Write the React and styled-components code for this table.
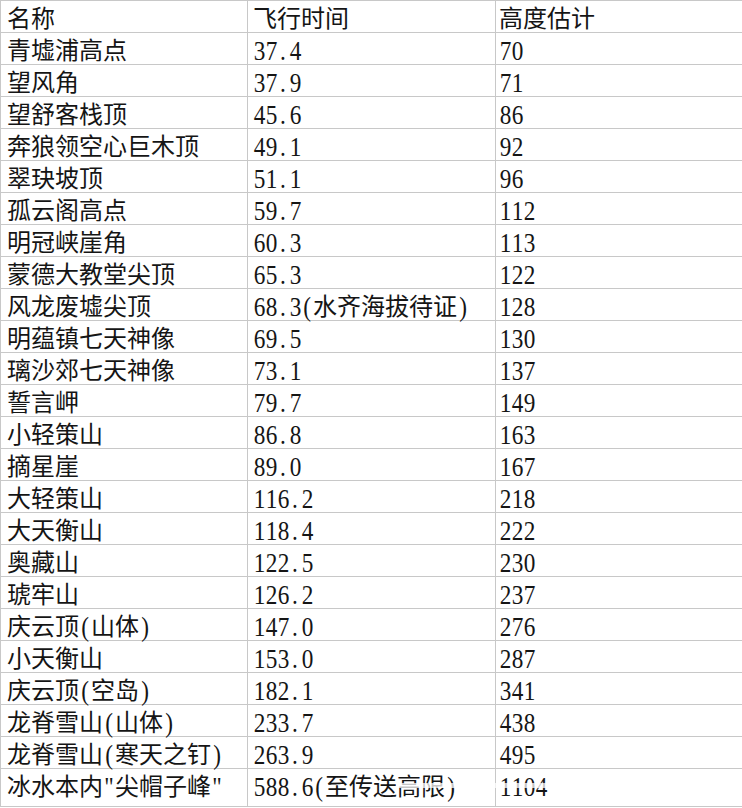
import React from "react";
import styled, { createGlobalStyle } from "styled-components";

const Global = createGlobalStyle`
  html, body { margin: 0; padding: 0; background: #fff; }
  body { width: 742px; height: 808px; overflow: hidden; }
`;

const Sheet = styled.div`
  position: relative;
  width: 742px;
  display: grid;
  grid-template-columns: 247px 248px 247px;
  border-top: 1px solid #c8c8c8;
  border-left: 1px solid #c8c8c8;
  box-sizing: border-box;
  font-family: "Noto Sans CJK SC", "Noto Sans", sans-serif;
  font-size: 24px;
  color: #151515;
`;

const Cell = styled.div`
  box-sizing: border-box;
  height: ${(p) => (p.$tall ? 38 : 32)}px;
  border-right: 1px solid #c8c8c8;
  border-bottom: 1px solid #c8c8c8;
  padding-left: ${(p) => p.$pad}px;
  line-height: 31px;
  white-space: nowrap;
`;

const Half = styled.span`
  display: inline-block;
  width: 12px;
  text-align: center;
  font-family: "Liberation Serif", serif;
  font-size: 27px;
  line-height: 20px;
  vertical-align: -1px;
  transform: scaleX(0.86);
`;

const Band = styled.div`
  position: absolute;
  left: 395px;
  right: 0;
  top: 782px;
  height: 5px;
  background: rgba(255, 255, 255, 0.75);
`;

const Text = ({ s }) => {
  const parts = [];
  let buf = "";
  [...s].forEach((ch, i) => {
    if (ch.charCodeAt(0) < 128) {
      if (buf) {
        parts.push(buf);
        buf = "";
      }
      parts.push(<Half key={i}>{ch}</Half>);
    } else {
      buf += ch;
    }
  });
  if (buf) parts.push(buf);
  return <>{parts}</>;
};

const rows = [
  ["名称", "飞行时间", "高度估计"],
  ["青墟浦高点", "37.4", "70"],
  ["望风角", "37.9", "71"],
  ["望舒客栈顶", "45.6", "86"],
  ["奔狼领空心巨木顶", "49.1", "92"],
  ["翠玦坡顶", "51.1", "96"],
  ["孤云阁高点", "59.7", "112"],
  ["明冠峡崖角", "60.3", "113"],
  ["蒙德大教堂尖顶", "65.3", "122"],
  ["风龙废墟尖顶", "68.3(水齐海拔待证)", "128"],
  ["明蕴镇七天神像", "69.5", "130"],
  ["璃沙郊七天神像", "73.1", "137"],
  ["誓言岬", "79.7", "149"],
  ["小轻策山", "86.8", "163"],
  ["摘星崖", "89.0", "167"],
  ["大轻策山", "116.2", "218"],
  ["大天衡山", "118.4", "222"],
  ["奥藏山", "122.5", "230"],
  ["琥牢山", "126.2", "237"],
  ["庆云顶(山体)", "147.0", "276"],
  ["小天衡山", "153.0", "287"],
  ["庆云顶(空岛)", "182.1", "341"],
  ["龙脊雪山(山体)", "233.7", "438"],
  ["龙脊雪山(寒天之钉)", "263.9", "495"],
  ['冰水本内"尖帽子峰"', "588.6(至传送高限)", "1104"],
];

export default function App() {
  return (
    <>
      <Global />
      <Sheet>
        {rows.map((r, ri) =>
          r.map((c, ci) => (
            <Cell
              key={ri + "-" + ci}
              $pad={ci === 0 ? 6 : ci === 1 ? 5 : 3}
              $tall={ri === rows.length - 1}
            >
              <Text s={c} />
            </Cell>
          ))
        )}
        <Band />
      </Sheet>
    </>
  );
}
